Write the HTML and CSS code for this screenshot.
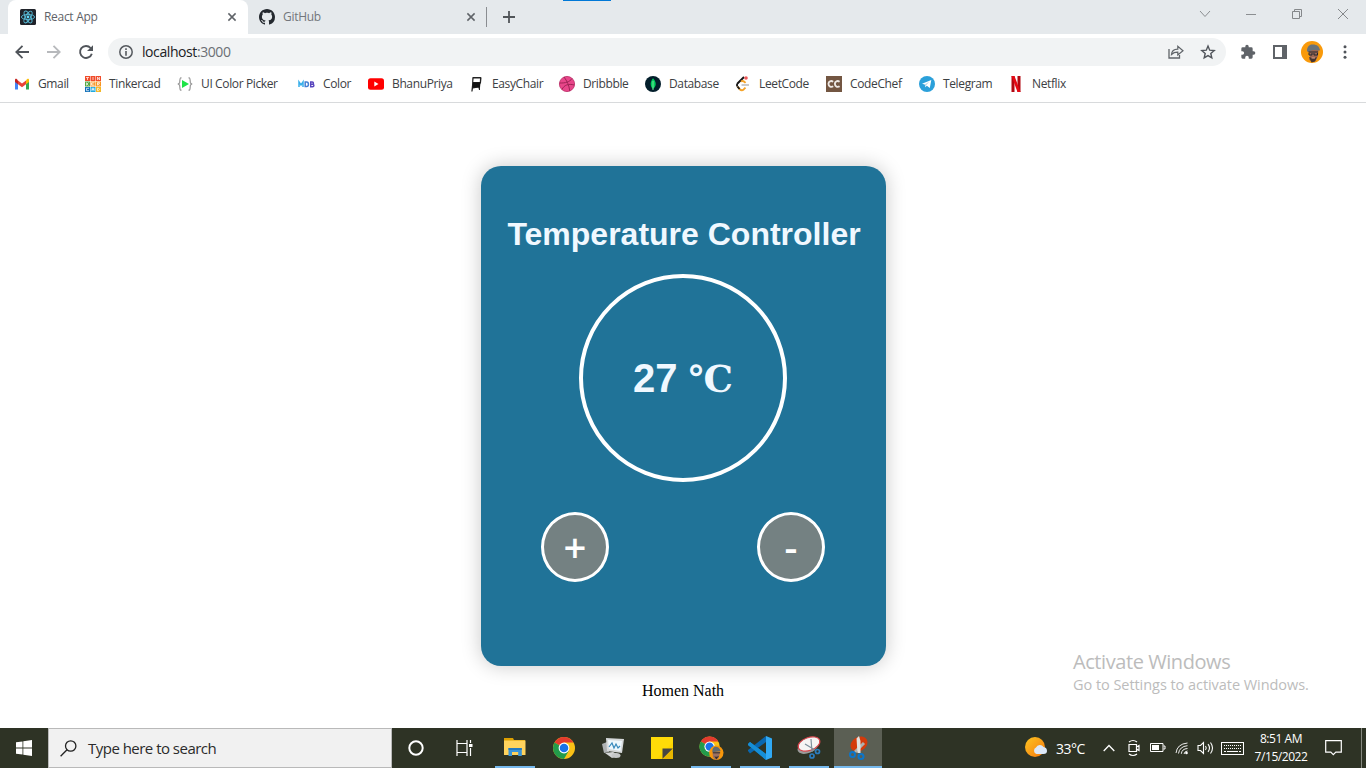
FILE: index.html
```html
<!DOCTYPE html>
<html lang="en">
<head>
<meta charset="utf-8">
<title>React App</title>
<link rel="stylesheet" href="styles.css">
</head>
<body>
<div class="screen">
  <header class="tabstrip">
    <div class="tab tab-active">
      <svg width="16" height="16" viewBox="0 0 16 16"><rect width="16" height="16" rx="1.5" fill="#20232a"/><g fill="none" stroke="#58bcd8" stroke-width=".9"><ellipse cx="8" cy="8" rx="6.6" ry="2.6"/><ellipse cx="8" cy="8" rx="6.6" ry="2.6" transform="rotate(60 8 8)"/><ellipse cx="8" cy="8" rx="6.6" ry="2.6" transform="rotate(120 8 8)"/></g><circle cx="8" cy="8" r="1.4" fill="#61dafb"/></svg>
      <span class="tab-title">React App</span>
      <svg class="close" width="8" height="8" viewBox="0 0 8 8"><path d="M.4.4l7.2 7.2M7.6.4L.4 7.6" stroke="#5f6368" stroke-width="1.5"/></svg>
    </div>
    <div class="tab">
      <svg width="16" height="16" viewBox="0 0 16 16"><path fill="#24292f" d="M8 0C3.58 0 0 3.58 0 8c0 3.54 2.29 6.53 5.47 7.59.4.07.55-.17.55-.38 0-.19-.01-.82-.01-1.49-2.01.37-2.53-.49-2.69-.94-.09-.23-.48-.94-.82-1.13-.28-.15-.68-.52-.01-.53.63-.01 1.08.58 1.23.82.72 1.21 1.87.87 2.33.66.07-.52.28-.87.51-1.07-1.78-.2-3.64-.89-3.64-3.95 0-.87.31-1.59.82-2.15-.08-.2-.36-1.02.08-2.12 0 0 .67-.21 2.2.82.64-.18 1.32-.27 2-.27s1.36.09 2 .27c1.53-1.04 2.2-.82 2.2-.82.44 1.1.16 1.92.08 2.12.51.56.82 1.27.82 2.15 0 3.07-1.87 3.75-3.65 3.95.29.25.54.73.54 1.48 0 1.07-.01 1.93-.01 2.2 0 .21.15.46.55.38A8.01 8.01 0 0 0 16 8c0-4.42-3.58-8-8-8z"/></svg>
      <span class="tab-title github">GitHub</span>
      <svg class="close" width="8" height="8" viewBox="0 0 8 8"><path d="M.4.4l7.2 7.2M7.6.4L.4 7.6" stroke="#5f6368" stroke-width="1.5"/></svg>
    </div>
    <div class="separator"></div>
    <svg class="newtab" width="12" height="12" viewBox="0 0 12 12"><path d="M6 0v12M0 6h12" stroke="#515559" stroke-width="1.8"/></svg>
    <div class="capture-mark"></div>
    <div class="window-controls">
      <svg width="12" height="12" viewBox="0 0 12 12"><path d="M1 3l5 5.5L11 3" fill="none" stroke="#8b8e91"/></svg>
      <svg width="12" height="12" viewBox="0 0 12 12"><path d="M1 6.5h10" stroke="#8b8e91"/></svg>
      <svg width="12" height="12" viewBox="0 0 12 12"><path d="M1.5 3.5h7v7h-7zM3.5 3.500V1.500h7v7h-2" fill="none" stroke="#85888b"/></svg>
      <svg width="12" height="12" viewBox="0 0 12 12"><path d="M1 1l10 10M11 1L1 11" stroke="#85888b"/></svg>
    </div>
  </header>

  <nav class="toolbar">
    <svg class="back" width="14" height="14" viewBox="0 0 14 14"><path d="M14 7H1.500M7.500.8L1.300 7l6.200 6.200" fill="none" stroke="#50545a" stroke-width="1.8"/></svg>
    <svg class="forward" width="14" height="14" viewBox="0 0 14 14"><path d="M0 7h12.500M6.500.8L12.700 7l-6.200 6.200" fill="none" stroke="#b7b9bc" stroke-width="1.8"/></svg>
    <svg class="reload" width="14" height="14" viewBox="0 0 14 14"><path d="M11.600 3A6 6 0 1 0 12.800 8.700" fill="none" stroke="#50545a" stroke-width="1.900"/><path d="M14 .2V6H8z" fill="#50545a"/></svg>
    <div class="omnibox">
      <svg width="14" height="14" viewBox="0 0 14 14"><circle cx="7" cy="7" r="6.200" fill="none" stroke="#55595e" stroke-width="1.500"/><path d="M7 3.200v1.700M7 6v4.700" stroke="#55595e" stroke-width="1.600"/></svg>
      <span class="url">localhost<span class="port">:3000</span></span>
      <svg class="share" width="16" height="14" viewBox="0 0 16 14"><path d="M1 4v9h10.500v-3" fill="none" stroke="#606469" stroke-width="1.300"/><path d="M3.500 9.500c.2-3.600 2.600-5.300 6.300-5.400V1.200L15 5.700 9.800 10V7.200c-3-.1-4.700.7-6.300 2.300z" fill="none" stroke="#606469" stroke-width="1.200"/></svg>
      <svg width="14" height="14" viewBox="0 0 14 14"><path d="M7 1.100l1.700 4.100 4.500.4-3.400 2.900 1 4.400L7 10.600l-3.800 2.300 1-4.400L.8 5.600l4.500-.4z" fill="none" stroke="#50545a" stroke-width="1.400"/></svg>
    </div>
    <svg class="puzzle" width="16" height="16" viewBox="0 0 24 24"><path fill="#5f6368" d="M20.500 11H19V7a2 2 0 0 0-2-2h-4V3.500a2.500 2.500 0 0 0-5 0V5H4a2 2 0 0 0-2 2v3.800h1.500a2.700 2.700 0 0 1 0 5.400H2V20a2 2 0 0 0 2 2h3.800v-1.500a2.700 2.700 0 0 1 5.400 0V22H17a2 2 0 0 0 2-2v-4h1.500a2.500 2.500 0 0 0 0-5z"/></svg>
    <svg class="panel" width="14" height="14" viewBox="0 0 14 14"><path fill="#5f6368" fill-rule="evenodd" d="M0 0h14v14H0zM2 2v10h7V2z"/></svg>
    <svg class="avatar" width="22" height="22" viewBox="0 0 22 22"><circle cx="11" cy="11" r="11" fill="#f99a0b"/><path d="M7 9h10.500l-.5 6-2.500 5-3.500 1-3-2.500 1-3z" fill="#9c6753"/><path d="M6 10c0-4.500 2.500-7 6-6.500 4 0 6.500 2 7 6-4-1-9-1-12 1.500z" fill="#69737a"/><path d="M7.500 11h9.500M8 12v2h3v-2m2 0v2h3.500v-2" fill="none" stroke="#222830" stroke-width="1"/><path d="M8 16c3 1.500 6 1.500 8 0l-2 4.500-3.500 1z" fill="#46352f"/><path d="M10.500 17h3.500" stroke="#dba28c"/></svg>
    <svg class="more" width="4" height="14" viewBox="0 0 4 14"><g fill="#50545a"><circle cx="2" cy="1.800" r="1.500"/><circle cx="2" cy="7" r="1.500"/><circle cx="2" cy="12.200" r="1.500"/></g></svg>
  </nav>

  <nav class="bookmarks">
    <div class="bookmark"><svg width="16" height="16" viewBox="0 0 16 16"><path d="M1 4v9.500h3V7z" fill="#4285f4"/><path d="M12 7v6.500h3V4z" fill="#34a853"/><path d="M12 4.500v3.800l3-2.300V4c0-1.700-1.700-2-3 .5z" fill="#fbbc04"/><path d="M4 4.500l4 3 4-3v3.800l-4 3-4-3z" fill="#ea4335"/><path d="M1 4c0-1.700 1.700-2 3 .5v3.800L1 6z" fill="#c5221f"/></svg><span>Gmail</span></div>
    <div class="bookmark"><svg width="16" height="16" viewBox="0 0 16 16"><path fill="#f04c2b" d="M0 0h5v5H0zM5.500 0h5v5h-5zM11 0h5v5h-5z"/><path fill="#57a845" d="M0 5.500h5v5H0z"/><path fill="#f79420" d="M5.500 5.500h5v5h-5zM11 5.500h5v5h-5z"/><path fill="#1573ba" d="M0 11h5v5H0z"/><path fill="#20a9df" d="M5.500 11h5v5h-5z"/><path fill="#f3b727" d="M11 11h5v5h-5z"/><path d="M1 1.500h3M2.500 1.500V4M8 1v3M12.500 4V1l2 3V1M1.500 6.500v3m2-3L2 8l1.500 1.500M9.500 6.700h-3v2.600h3M6.500 8h2M12.500 9.500v-3h2v1.300h-2l2 1.700M4 12.300H1.500v2.400H4M7 15v-2.700h2V15m-2-1.500h2m3.500-1.200h1l1 1-1 1.400h-1z" fill="none" stroke="#fff" stroke-width=".7"/></svg><span>Tinkercad</span></div>
    <div class="bookmark"><svg width="16" height="16" viewBox="0 0 16 16"><path d="M4.500 1.800H3.800C2.500 1.800 3 6.500 2.500 7L1.300 8l1.200 1c.5.500 0 5.200 1.300 5.200h.7M11.500 1.800h.7c1.300 0 .8 4.700 1.300 5.200l1.200 1-1.200 1c-.5.500 0 5.200-1.300 5.200h-.7" fill="none" stroke="#989898" stroke-width="1.200"/><path d="M5 4l7 4-7 4z" fill="#1ee447"/></svg><span>UI Color Picker</span></div>
    <div class="bookmark"><svg width="17" height="16" viewBox="0 0 17 16"><path d="M1 11V6l2 3 2-3v5" fill="none" stroke="#37aeea" stroke-width="1.500"/><path d="M7.200 6h1.500c2.300 0 2.300 4.500 0 4.500H7.200z" fill="none" stroke="#447fd3" stroke-width="1.500"/><path d="M12.700 6h1.500c1.700 0 1.700 2.300 0 2.300h-1.500 1.800c1.900 0 1.900 2.400 0 2.400h-1.800z" fill="none" stroke="#5844bd" stroke-width="1.400"/></svg><span>Color</span></div>
    <div class="bookmark"><svg width="16" height="16" viewBox="0 0 16 16"><rect y="2.300" width="16" height="11.400" rx="2.500" fill="#f00"/><path d="M6.300 5.600v4.800L10.500 8z" fill="#fff"/></svg><span>BhanuPriya</span></div>
    <div class="bookmark"><svg width="16" height="16" viewBox="0 0 16 16"><path fill="#222" fill-rule="evenodd" d="M5 1h7.500q1 0 1 1L13 7l-1 1v6h-1l-.6-2.500-5.400 1-.5 3H3.300L4 9 4.300 2Q4.300 1 5 1zm.6 1.600L5.300 6h6.500l.2-3.400z"/><path d="M5 6.500h7.500l-.5 5H4.500z" fill="#111"/></svg><span>EasyChair</span></div>
    <div class="bookmark"><svg width="16" height="16" viewBox="0 0 16 16"><circle cx="8" cy="8" r="7.600" fill="#e8468a" stroke="#ba2a64" stroke-width=".8"/><path d="M5 1C8 5 10 9 10.800 15M.6 7c6 .2 10-1 12.600-4.600M3 13.500C5 9 9.500 7.400 15.300 9" fill="none" stroke="#9e2455" stroke-width="1"/></svg><span>Dribbble</span></div>
    <div class="bookmark"><svg width="16" height="16" viewBox="0 0 16 16"><circle cx="8" cy="8" r="8" fill="#031e2b"/><path d="M8 2.200c3.800 4 3.500 8-.1 10.700C4.500 9.900 5.300 5.500 8 2.200z" fill="#00ce5d"/><path d="M8 5v9" stroke="#77e49d"/></svg><span>Database</span></div>
    <div class="bookmark"><svg width="16" height="16" viewBox="0 0 16 16"><path d="M9 1L2.500 7.500q-1.300 1.500 0 3" fill="none" stroke="#181818" stroke-width="1.900"/><path d="M2.500 10.500l2.200 2.700q2 1.800 4 .2l1.800-1.800M6 5.500q1.700-1.200 3.300.2l1.300 1.200" fill="none" stroke="#f5a329" stroke-width="1.900"/><path d="M2.500 10.500L4.500 13" stroke="#181818" stroke-width="1.900"/><path d="M6.500 9H14" stroke="#b8b8b8" stroke-width="1.500"/><circle cx="11" cy="2" r="1.800" fill="#ef5859"/></svg><span>LeetCode</span></div>
    <div class="bookmark"><svg width="16" height="16" viewBox="0 0 16 16"><rect width="16" height="16" fill="#735642"/><path d="M7.200 5.700c-2.200-1.400-4.700-.3-4.700 2.100 0 2.700 2.700 3.800 4.700 2.400M13.600 5.700c-2.200-1.400-4.700-.3-4.700 2.100 0 2.700 2.700 3.800 4.700 2.400" fill="none" stroke="#eee9e5" stroke-width="1.900"/></svg><span>CodeChef</span></div>
    <div class="bookmark"><svg width="16" height="16" viewBox="0 0 16 16"><circle cx="8" cy="8" r="8" fill="#2ba0da"/><path d="M3 7.700l9.300-3.800-1.500 8-3-2.100-1.500 1.500-.5-2.700z" fill="#fff"/><path d="M5.800 8.600l4.600-3-3.400 3.800-.7 1.900z" fill="#b5d8ec"/></svg><span>Telegram</span></div>
    <div class="bookmark"><svg width="16" height="16" viewBox="0 0 16 16"><path d="M3.500 0h3v16h-3zM9.500 0h3v16h-3z" fill="#b20710"/><path d="M3.500 0h3l6 16h-3z" fill="#e50914"/></svg><span>Netflix</span></div>
  </nav>

  <main class="page">
    <section class="card">
      <h1 class="title">Temperature Controller</h1>
      <div class="dial"><span class="reading">27 <span class="unit">℃</span></span></div>
      <div class="buttons">
        <button class="round">+</button>
        <button class="round">-</button>
      </div>
    </section>
    <div class="author">Homen Nath</div>
    <aside class="watermark">
      <div class="wm-title">Activate Windows</div>
      <div class="wm-text">Go to Settings to activate Windows.</div>
    </aside>
  </main>

  <footer class="taskbar">
    <div class="start"><svg width="16" height="16" viewBox="0 0 16 16"><path fill="#fff" d="M0 2.300L6.500 1.400v6.200H0zM7.300 1.300L16 0v7.600H7.300zM0 8.400h6.500v6.200L0 13.700zM7.300 8.400H16V16l-8.700-1.300z"/></svg></div>
    <div class="search">
      <svg width="17" height="17" viewBox="0 0 17 17"><circle cx="10.700" cy="6" r="5.200" fill="none" stroke="#222" stroke-width="1.300"/><path d="M7 9.700L.6 16.200" stroke="#222" stroke-width="1.300"/></svg>
      <span>Type here to search</span>
    </div>
    <div class="shell-btn"><svg width="16" height="16" viewBox="0 0 16 16"><circle cx="8" cy="8" r="6.700" fill="none" stroke="#fff" stroke-width="2"/></svg></div>
    <div class="shell-btn"><svg width="17" height="16" viewBox="0 0 17 16"><path d="M1 0v3.500h10V0M1 16v-3.500h10V16M1 3.500v9M11 3.500v9M14.500 0v3M14.500 8v8" fill="none" stroke="#fff" stroke-width="1.200"/><path d="M13 4h3.500v3H13z" fill="#fff"/></svg></div>
    <div class="apps">
      <div class="app open"><svg width="22" height="20" viewBox="0 0 22 20"><path d="M0 1h9l1 2h11v5H0z" fill="#dda001"/><path d="M0 3.500h21.500V18H0z" fill="#ffd35d"/><path d="M4.500 11h13.300v8h-3.600v-4H8v4H4.500z" fill="#3a95d9"/><path d="M4.500 11h13.300v2H4.500z" fill="#2479bf"/></svg></div>
      <div class="app"><svg class="lower" width="22" height="22" viewBox="0 0 22 22"><circle cx="11" cy="11" r="11" fill="#fbc116"/><path d="M11 11L1.500 5.500A11 11 0 0 1 20.500 5.500H11z" fill="#e33b2e"/><path d="M11 11L1.500 5.500A11 11 0 0 0 11 22l4.800-8.300z" fill="#229b4b"/><circle cx="11" cy="11" r="5.400" fill="#fff"/><circle cx="11" cy="11" r="4.300" fill="#1a73e8"/></svg></div>
      <div class="app"><svg class="lower" width="24" height="22" viewBox="0 0 24 22"><path d="M1 7l5-2 2 10-5 1z" fill="#aeb2b3"/><path d="M5 1l18 1-2 14L6 14z" fill="#d6d9da"/><path d="M7 3l14 1-1.500 10L8 12z" fill="#eef8fc"/><path d="M8 10l3-4 2 5 2-4 2 4 2-2" fill="none" stroke="#3789bb" stroke-width="1.200"/><path d="M4 16l8-1 6 3-7 3z" fill="#d3d5d5"/><ellipse cx="15" cy="18.500" rx="4.500" ry="2.500" fill="#c5c8c8"/></svg></div>
      <div class="app"><svg class="lower" width="22" height="22" viewBox="0 0 22 22"><path d="M0 0h22v22H0z" fill="#fed500"/><path d="M0 0h22v5L5 22H0z" fill="#ffdb08"/><path d="M11.500 11.500H22L11.500 22z" fill="#474642"/><path d="M22 11.500V22H11.500z" fill="#e8b700"/></svg></div>
      <div class="app open"><svg class="lower" width="25" height="25" viewBox="0 0 26 26"><circle cx="11" cy="11" r="10.500" fill="#fbc116"/><path d="M11 11L1.900 5.700A10.500 10.500 0 0 1 20.100 5.700H11z" fill="#e33b2e"/><path d="M11 11L1.900 5.700A10.500 10.500 0 0 0 11 21.500l4.600-7.900z" fill="#229b4b"/><circle cx="11" cy="11" r="5.400" fill="#fff"/><circle cx="11" cy="11" r="4.300" fill="#1a73e8"/><circle cx="18" cy="17.500" r="7.500" fill="#f8970b"/><path d="M14 16h8l-1.500 7-3 2-3-3z" fill="#9c7061"/><path d="M14 17c-1-8 7-7 8.500-1.500z" fill="#626b70"/><path d="M14.500 17.500H22" stroke="#302b2a"/><path d="M16 21c2 1 3 1 5-.5l-3 4z" fill="#332c2a"/></svg></div>
      <div class="app open"><svg class="lower" width="24" height="24" viewBox="0 0 24 24"><path d="M0 8l2-2L18 18v6L0 9z" fill="#087dc8"/><path d="M0 15l2 2.500L18 6V0L0 14z" fill="#0967b0"/><path d="M0 8l2-2 16 12v6L0 9z" fill="#168ed6"/><path d="M18 0l6 2.500v19L18 24z" fill="#30a9f4"/></svg></div>
      <div class="app open"><svg class="lower" width="24" height="24" viewBox="0 0 24 24"><ellipse cx="11" cy="11" rx="11" ry="6" transform="rotate(-22 11 11)" fill="#9a9b9b"/><ellipse cx="12" cy="8" rx="11.300" ry="6.400" transform="rotate(-20 12 8)" fill="#f5f4f4" stroke="#d6454c" stroke-width="1.200"/><path d="M8 8l10 6M14 3l1 13" stroke="#7d8f9c" stroke-width="1.200"/><g fill="none" stroke="#2b7dc1" stroke-width="1.700"><circle cx="20.500" cy="15.500" r="2"/><circle cx="15" cy="20" r="2"/></g></svg></div>
      <div class="app open current"><svg class="lower" width="22" height="24" viewBox="0 0 22 24"><ellipse cx="12" cy="8" rx="9" ry="7" transform="rotate(-30 12 8)" fill="#d33a0b"/><path d="M8 16l9-9" stroke="#aeb0ad" stroke-width="3"/><path d="M9.500 2.500L12 0l1.500 5v12h-3z" fill="#e0e1df"/><g fill="none" stroke="#0b76cc" stroke-width="2"><circle cx="5.500" cy="18.500" r="2.500"/><circle cx="14" cy="20.500" r="2.500"/></g></svg></div>
    </div>
    <div class="tray">
      <div class="weather"><svg width="22" height="22" viewBox="0 0 22 22"><defs><linearGradient id="sun" x2="1" y2="1"><stop stop-color="#fdc521"/><stop offset="1" stop-color="#f5780e"/></linearGradient></defs><circle cx="10" cy="10" r="10" fill="url(#sun)"/><path d="M11.500 17a3.500 3.500 0 0 1-.5-6.500 4.300 4.300 0 0 1 7.500-.5q3.500.5 3.500 4 0 3-3.500 3z" fill="#dce8f8"/></svg><span>33°C</span></div>
      <div class="tray-icon"><svg width="12" height="12" viewBox="0 0 12 12"><path d="M.7 9L6 3.500 11.300 9" fill="none" stroke="#fff" stroke-width="1.300"/></svg></div>
      <div class="tray-icon"><svg width="12" height="16" viewBox="0 0 12 16"><path d="M1 4.500h7.500v7H1zM8.500 7l2.500-1.500v5L8.500 9M1 2q4-3 8 0M1 14q4 3 8 0" fill="none" stroke="#fff" stroke-width="1.200"/></svg></div>
      <div class="tray-icon"><svg width="16" height="10" viewBox="0 0 16 10"><path d="M.5.5h12.500v8H.5zM13.500 3H15v3h-1.500" fill="none" stroke="#fff"/><path d="M2 2h7v5H2z" fill="#fff"/></svg></div>
      <div class="tray-icon"><svg width="14" height="14" viewBox="0 0 14 14"><path d="M1 12Q2 3 12.500 2M3.500 12.500Q4.500 5.500 12.500 4.700M6.300 12.800q.5-5 6.200-5.300M9 13q.5-2.700 3.500-3" fill="none" stroke="#eee" stroke-width="1"/><circle cx="11.500" cy="12" r="1.300" fill="#fff"/></svg></div>
      <div class="tray-icon"><svg width="17" height="14" viewBox="0 0 17 14"><path d="M1 4.500h2.500L6.500 1.500v11L3.500 9.500H1zM8.500 5q1.500 2 0 4M11 3.200q3 3.800 0 7.600M13.500 1.500q4 5.500 0 11" fill="none" stroke="#fff" stroke-width="1.100"/></svg></div>
      <div class="tray-icon"><svg width="23" height="13" viewBox="0 0 23 13"><rect x=".5" y=".5" width="22" height="12" fill="none" stroke="#fff"/><path d="M3 3.500h17M3 6.500h17" stroke="#fff" stroke-dasharray="1 1"/><path d="M3 9.500h2m1 0h11m1 0h2" stroke="#fff"/></svg></div>
      <div class="clock"><span class="time">8:51 AM</span><span class="date">7/15/2022</span></div>
      <div class="tray-icon"><svg width="17" height="16" viewBox="0 0 17 16"><path d="M.7.700h15.600v11.500h-5.500l-2.500 2.500-2.500-2.500H.7z" fill="none" stroke="#fff" stroke-width="1.200"/></svg></div>
      <div class="peek"></div>
    </div>
  </footer>
</div>
</body>
</html>
```
FILE: styles.css
```css
* { box-sizing: border-box; }
html, body { margin: 0; }
body { font-family: "Open Sans", "Noto Sans", sans-serif; background: #fff; }
svg { display: block; flex: none; overflow: visible; }
span { white-space: nowrap; }
.screen { width: 1366px; height: 768px; display: flex; flex-direction: column; overflow: hidden; }

.tabstrip { height: 34px; flex: none; background: #e5e9ec; display: flex; padding-left: 8px; align-items: stretch; position: relative; }
.tab { width: 239px; display: flex; align-items: center; padding: 0 12px 0 11px; }
.tab-active { width: 240px; padding-left: 12px; background: #fff; border-radius: 8px 8px 0 0; }
.tab-title { font-size: 12px; line-height: 16px; color: #5f6368; margin-left: 8px; letter-spacing: -.3px; }
.github { color: #72767b; }
.close { margin-left: auto; }
.separator { width: 1px; height: 20px; margin-top: 7px; margin-left: -1px; background: #8a8d91; }
.newtab { margin: 11px 0 0 16px; }
.capture-mark { position: absolute; left: 563px; top: 0; width: 48px; height: 1px; background: #0078d7; }
.window-controls { margin-left: auto; display: flex; gap: 34px; padding: 8px 17px 0 0; }

.toolbar { height: 36px; flex: none; display: flex; align-items: center; padding-left: 15px; background: #fff; }
.forward { margin-left: 18px; }
.reload { margin-left: 18px; }
.omnibox { margin-left: 15px; width: 1118px; height: 28px; border-radius: 14px; background: #f1f3f4; display: flex; align-items: center; padding: 0 11px; }
.url { margin-left: 9px; font-size: 14px; line-height: 20px; color: #202124; letter-spacing: -.42px; }
.port { color: #6b6f74; }
.share { margin-left: auto; margin-right: 17px; }
.puzzle { margin-left: 14px; }
.panel { margin-left: 17px; }
.avatar { margin-left: 14px; }
.more { margin-left: 20px; }

.bookmarks { height: 33px; flex: none; display: grid; grid-template-columns: 71px 92px 121px 70px 100px 91px 86px 90px 91px 93px 89px 1fr; padding: 0 0 4px 14px; border-bottom: 1px solid #d8dadc; background: #fff; align-items: center; }
.bookmark { display: flex; align-items: center; gap: 8px; font-size: 12px; line-height: 16px; color: #3c4043; letter-spacing: -.37px; }

.page { flex: 1; position: relative; display: flex; flex-direction: column; align-items: center; padding-top: 63px; }
.card { width: 405px; height: 500px; flex: none; margin-left: 1px; border-radius: 20px; background: #207398; box-shadow: 0 0 20px rgba(0, 0, 0, .22); display: flex; flex-direction: column; align-items: center; padding: 50px 1px 0 0; font-family: "Liberation Sans", Arial, sans-serif; color: aliceblue; }
.title { margin: 0 0 22px; padding-left: 2px; font-size: 32px; line-height: 36px; font-weight: 700; white-space: nowrap; }
.dial { width: 208px; height: 208px; border: 4px solid #fff; border-radius: 50%; display: flex; align-items: center; justify-content: center; flex: none; }
.reading { font-size: 40px; line-height: 46px; font-weight: 700; }
.unit { font-family: "Liberation Serif", "DejaVu Serif", serif; font-size: 37px; line-height: 1; }
.buttons { display: flex; gap: 148px; margin-top: 30px; }
.round { width: 68px; height: 70px; border: 3px solid #fff; border-radius: 50%; background: #748182; color: #fff; font: 600 40px/40px "Open Sans", "Noto Sans", sans-serif; padding: 0; }
.author { margin-top: 16px; font: 16px/18px "Liberation Serif", "Times New Roman", serif; color: #000; }
.watermark { position: absolute; left: 1073px; top: 545px; color: #bcbcbc; white-space: nowrap; }
.wm-title { font-size: 20px; line-height: 27px; letter-spacing: -.43px; }
.wm-text { font-size: 14.5px; line-height: 19px; letter-spacing: -.05px; }

.taskbar { height: 40px; flex: none; background: #2e3325; color: #fff; display: flex; }
.start { width: 48px; display: grid; place-items: center; }
.search { width: 344px; background: #f1f1f1; border: 1px solid #b9b9b9; display: flex; align-items: center; gap: 11px; padding-left: 11px; color: #2b2b2b; font-size: 15px; letter-spacing: -.52px; }
.shell-btn { width: 48px; display: grid; place-items: center; }
.apps { display: flex; gap: 9px; margin-left: 7px; }
.app { width: 40px; display: grid; place-items: center; border-bottom: 2px solid transparent; }
.lower { margin-top: 2px; }
.open { border-bottom-color: #76b9ed; }
.current { width: 48px; margin-left: -4px; background: #5b5f54; }
.tray { margin-left: auto; display: grid; grid-template-columns: 72px 24px 25px 24px 24px 23px 31px 66px 38px 14px; }
.weather { display: flex; align-items: center; gap: 9px; font-size: 14px; letter-spacing: -.5px; }
.tray-icon { display: grid; place-items: center; }
.clock { display: flex; flex-direction: column; align-items: center; padding-top: 2px; font-size: 12px; line-height: 18px; letter-spacing: -.45px; }
.peek { width: 1px; margin-left: 9px; background: #85887f; }
```
